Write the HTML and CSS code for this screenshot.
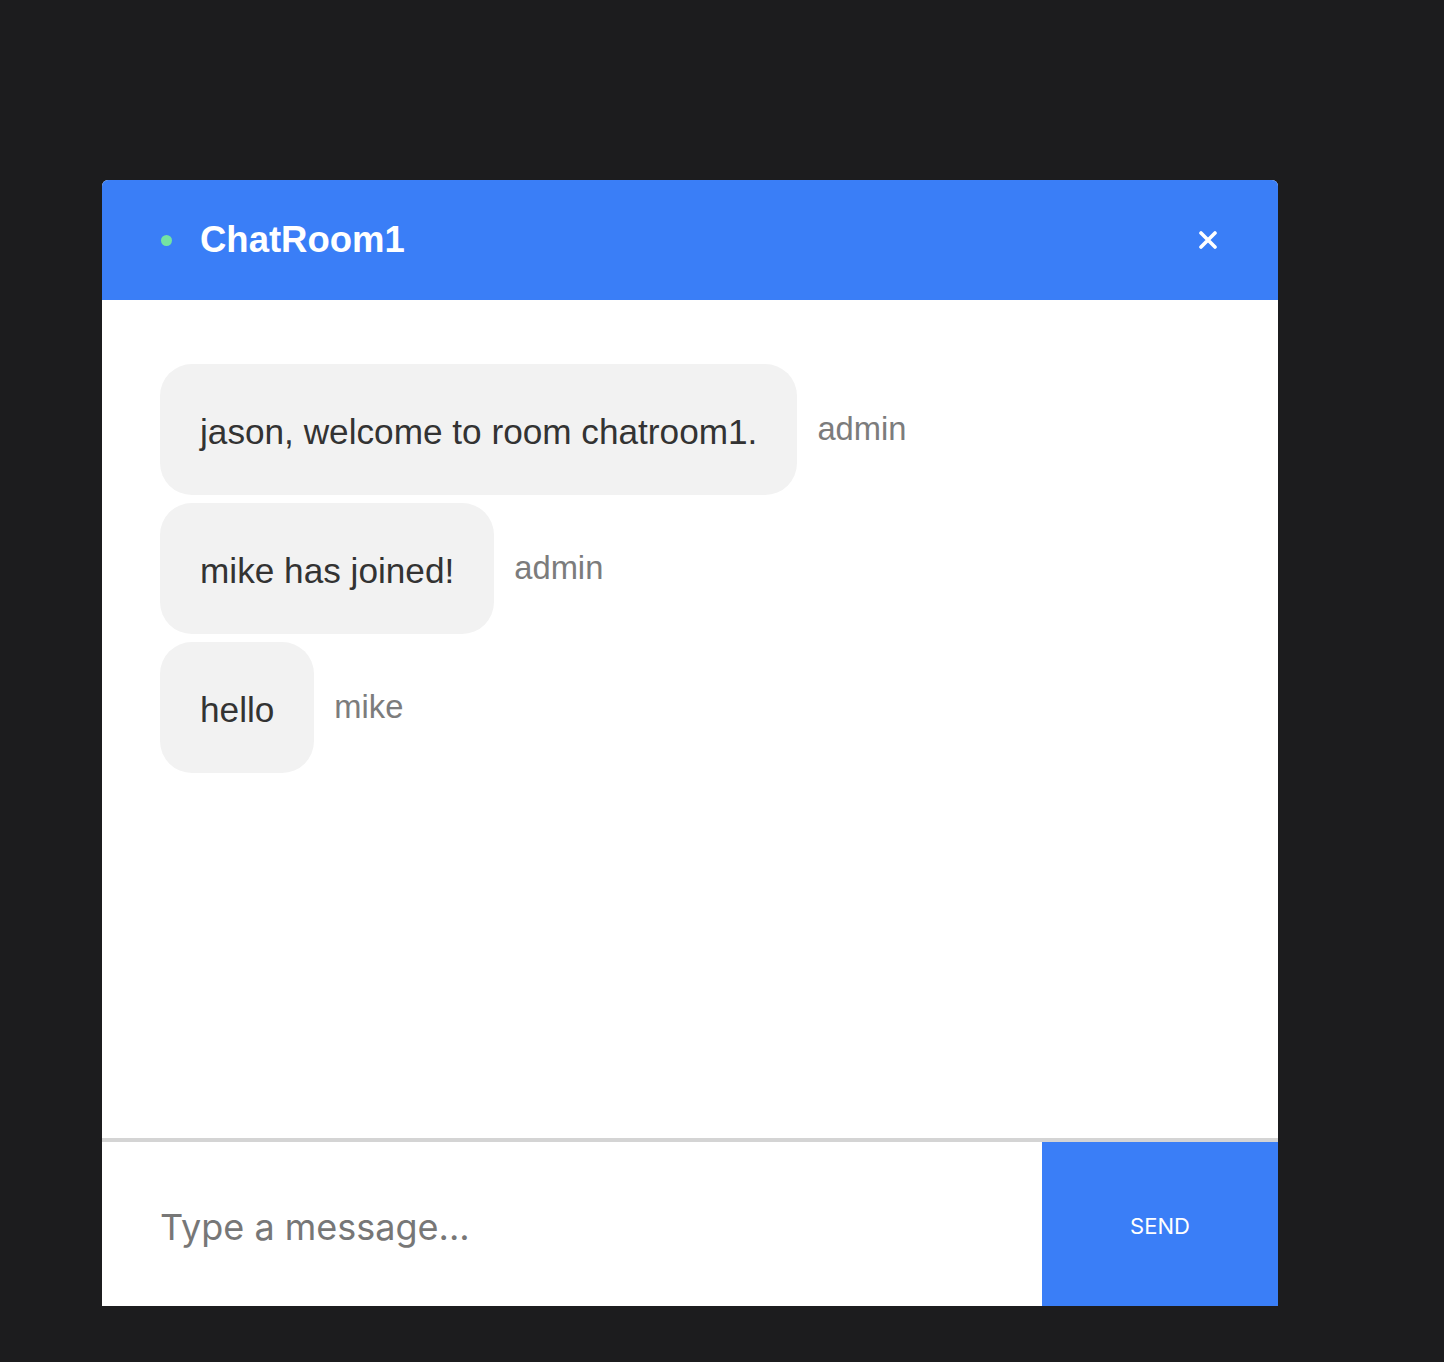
FILE: index.html
```html
<!DOCTYPE html>
<html>
<head>
<meta charset="utf-8">
<title>ChatRoom1</title>
<link rel="stylesheet" href="styles.css">
</head>
<body>
<div class="page">
  <div class="chat">
    <div class="chat-header">
      <span class="status-dot"></span>
      <h1 class="room-title">ChatRoom1</h1>
      <button class="close-btn" aria-label="Close">
        <svg width="20" height="18" viewBox="0 0 20 18"><path d="M3 2 L17 16 M17 2 L3 16" stroke="#fff" stroke-width="3.6" stroke-linecap="round" fill="none"/></svg>
      </button>
    </div>
    <div class="chat-body">
      <div class="message">
        <div class="bubble">jason, welcome to room chatroom1.</div>
        <span class="sender">admin</span>
      </div>
      <div class="message">
        <div class="bubble">mike has joined!</div>
        <span class="sender">admin</span>
      </div>
      <div class="message">
        <div class="bubble">hello</div>
        <span class="sender">mike</span>
      </div>
    </div>
    <div class="chat-footer">
      <input class="msg-input" type="text" placeholder="Type a message...">
      <button class="send-btn">SEND</button>
    </div>
  </div>
</div>
</body>
</html>
```
FILE: styles.css
```css
html, body {
  margin: 0;
  padding: 0;
  background: #1c1c1e;
}
.page {
  padding: 180px 0 56px 102px;
}
.chat {
  width: 1176px;
  display: flex;
  flex-direction: column;
  background: #fff;
  border-radius: 6px 6px 0 0;
  overflow: hidden;
}
.chat-header {
  height: 120px;
  background: #3a7ef7;
  display: flex;
  align-items: center;
  padding: 0 60px 0 59px;
  box-sizing: border-box;
}
.status-dot {
  width: 11px;
  height: 11px;
  border-radius: 50%;
  background: #73e3a3;
  flex: none;
}
.room-title {
  margin: 0 0 0 28px;
  font-family: "Liberation Sans", Arial, sans-serif;
  font-weight: bold;
  font-size: 36.5px;
  color: #fff;
  flex: 1;
}
.close-btn {
  background: none;
  border: 0;
  padding: 0;
  width: 20px;
  height: 18px;
  display: flex;
  cursor: pointer;
}
.chat-body {
  height: 838px;
  box-sizing: border-box;
  padding: 64px 58px;
  display: flex;
  flex-direction: column;
  gap: 8px;
}
.message {
  display: flex;
  align-items: center;
  gap: 20px;
}
.bubble {
  background: #f2f2f2;
  border-radius: 32px;
  padding: 42px 40px 38px;
  font-family: "Liberation Sans", Arial, sans-serif;
  font-size: 35.2px;
  line-height: 51px;
  color: #333;
}
.sender {
  font-family: "Liberation Sans", Arial, sans-serif;
  font-size: 32.7px;
  color: #7c7c7c;
  margin-top: -2px;
}
.chat-footer {
  border-top: 4px solid #d4d4d4;
  height: 168px;
  box-sizing: border-box;
  display: flex;
}
.msg-input {
  flex: 1;
  border: 0;
  outline: none;
  padding: 5px 0 0 58px;
  font-family: Inter, "Noto Sans", sans-serif;
  font-size: 36px;
  color: #333;
  background: #fff;
}
.msg-input::placeholder {
  color: #777;
}
.send-btn {
  width: 236px;
  border: 0;
  padding: 4px 0 0;
  background: #3a7ef7;
  color: #fff;
  font-family: Inter, "Noto Sans", sans-serif;
  font-size: 22px;
  cursor: pointer;
}
```
